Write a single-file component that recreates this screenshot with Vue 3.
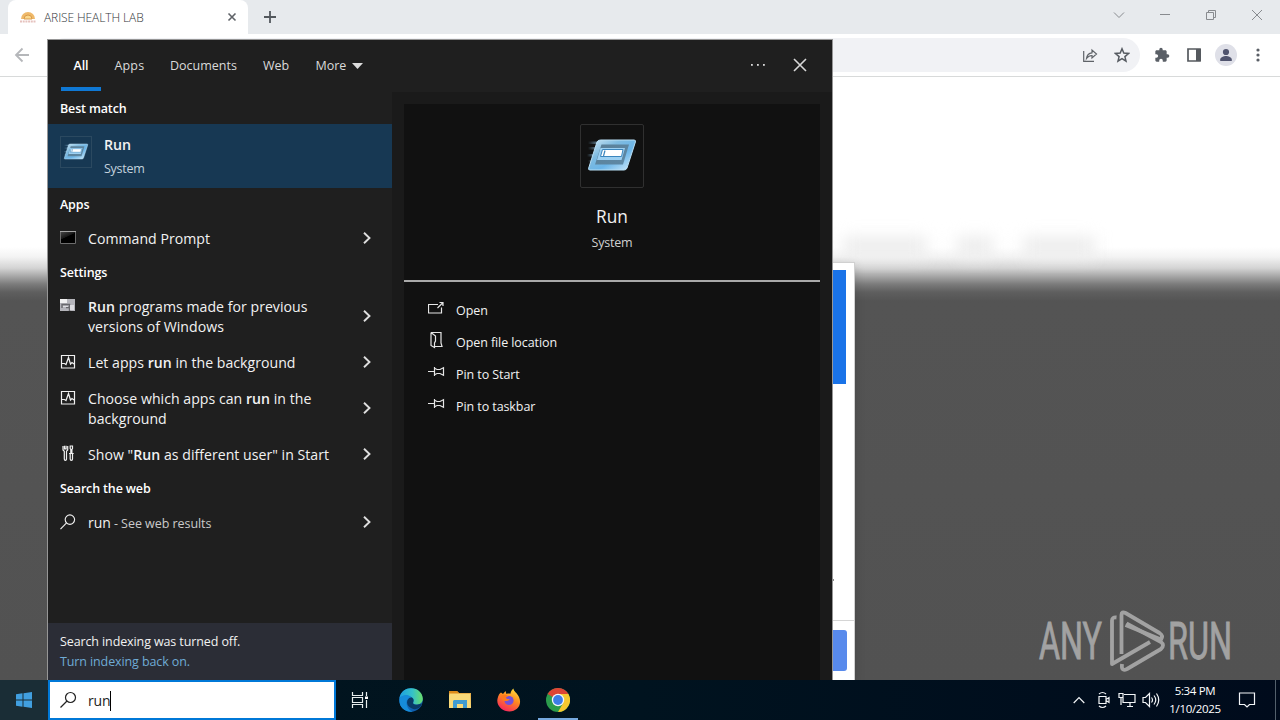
<script setup>
const tabs = ['All', 'Apps', 'Documents', 'Web', 'More']
const settings = [
  { icon: 'compat', parts: ['', 'Run', ' programs made for previous versions of Windows'], tall: true },
  { icon: 'activity', parts: ['Let apps ', 'run', ' in the background'] },
  { icon: 'activity', parts: ['Choose which apps can ', 'run', ' in the background'], tall: true },
  { icon: 'tools', parts: ['Show "', 'Run', ' as different user" in Start'] }
]
const actions = [
  { icon: 'open', label: 'Open' },
  { icon: 'location', label: 'Open file location' },
  { icon: 'pin', label: 'Pin to Start' },
  { icon: 'pin', label: 'Pin to taskbar' }
]
</script>

<template>
  <div class="screen">
    <svg class="defs" width="0" height="0">
      <defs>
        <linearGradient id="runFace" x1="0" y1="0" x2="1" y2="1">
          <stop offset="0" stop-color="#cfe8f6" /><stop offset=".35" stop-color="#7fbbe0" /><stop offset=".6" stop-color="#6bb5e8" /><stop offset="1" stop-color="#d8effb" />
        </linearGradient>
        <linearGradient id="runInner" x1="0" y1="0" x2="1" y2="1"><stop offset="0" stop-color="#5a7f98" /><stop offset="1" stop-color="#5f8aa6" /></linearGradient>
        <linearGradient id="runTail"><stop offset="0" stop-color="#7fb0d0" stop-opacity="0" /><stop offset="1" stop-color="#9cc8e4" /></linearGradient>
        <linearGradient id="edgeA" x1="0" y1="0" x2="1" y2="0"><stop offset="0" stop-color="#1c9fe0" /><stop offset=".55" stop-color="#35c1c9" /><stop offset="1" stop-color="#6adf6a" /></linearGradient>
        <linearGradient id="edgeB" x1="0" y1="0" x2="1" y2="1"><stop offset="0" stop-color="#1b8fe0" /><stop offset="1" stop-color="#0c4f9e" /></linearGradient>
        <linearGradient id="fox" x1=".8" y1="0" x2=".3" y2="1"><stop offset="0" stop-color="#ffe23f" /><stop offset=".45" stop-color="#ff8a1f" /><stop offset="1" stop-color="#f7235f" /></linearGradient>
        <symbol id="run" viewBox="0 0 64 64">
          <g fill="url(#runTail)"><rect x="8" y="17.500" width="16" height="2.500" /><rect x="8" y="23" width="14" height="2.500" /><rect x="7" y="30" width="12" height="2.500" /><rect x="8" y="36" width="10" height="2.500" /></g>
          <path d="M20.500 16H54q2 0 1.400 2L47 44q-.7 2-3 2H10q-2 0-1.300-2l8.300-26q.8-2 3.500-2z" fill="url(#runFace)" stroke="#b8dff5" stroke-width="1" />
          <path d="M21.500 20.500h27.500l-6 20H15z" fill="url(#runInner)" />
          <path d="M20.500 24h24.500l-3.500 12H17z" fill="#9cd0f2" />
          <path d="M22.500 25.500h20.500l-1.500 7H20.500z" fill="#fff" stroke="#3b86be" stroke-width="1" />
          <path d="M25 26.500l-1.500 5.500" stroke="#3b86be" stroke-width="1.200" />
        </symbol>
        <linearGradient id="cmd" x1="0" y1="0" x2=".6" y2="1"><stop offset="0" stop-color="#4a4a4a" /><stop offset=".5" stop-color="#161616" /><stop offset=".52" stop-color="#000" /></linearGradient>
      </defs>
    </svg>

    <main class="desktop">
      <section class="browser">
        <div class="tabstrip">
          <div class="tab">
            <svg class="favicon" width="16" height="14" viewBox="0 0 16 14">
              <path d="M1 9a7 7 0 0114 0z" fill="#efb96a" /><path d="M4 9a4 4 0 018 0z" fill="#fbd98e" stroke="#d99a4a" /><path d="M0 11.500h16" stroke="#e6c2be" stroke-width="2" stroke-dasharray="2 .7" />
            </svg>
            <span class="tab-title">ARISE HEALTH LAB</span>
            <svg width="10" height="10" viewBox="0 0 10 10"><path d="M1.500 1.500l7 7m0-7l-7 7" stroke="#5f6368" stroke-width="1.600" /></svg>
          </div>
          <svg class="plus" width="12" height="12" viewBox="0 0 12 12"><path d="M6 0v12M0 6h12" stroke="#53585d" stroke-width="1.800" /></svg>
          <div class="window-controls">
            <svg width="12" height="12" viewBox="0 0 12 12"><path d="M1 3.500l5 5 5-5" /></svg>
            <svg width="12" height="12" viewBox="0 0 12 12"><path d="M1 5.500h10" /></svg>
            <svg width="12" height="12" viewBox="0 0 12 12"><path d="M1.500 3.500h7v7h-7zM3.500 3.500v-2h7v7h-2" /></svg>
            <svg width="12" height="12" viewBox="0 0 12 12"><path d="M1 1l10 10M11 1L1 11" /></svg>
          </div>
        </div>
        <div class="toolbar">
          <svg class="back" width="16" height="16" viewBox="0 0 16 16"><path d="M15 8H2m6.500-6.500L2 8l6.500 6.500" fill="none" stroke="#b5b7ba" stroke-width="1.800" /></svg>
          <div class="address">
            <svg width="16" height="16" viewBox="0 0 16 16"><path d="M1.700 4v10.300H12M4.500 11.500C5 7.500 7.500 6 10 5.800V3l4.500 4-4.500 4V8.500c-2.500 0-4 1-5.500 3z" fill="none" stroke="#5f6368" stroke-width="1.200" /></svg>
            <svg width="16" height="16" viewBox="0 0 16 16"><path d="M8 1.800l1.800 4.300 4.700.4-3.600 3.100 1.100 4.600L8 11.700l-4 2.500 1.100-4.600-3.600-3.100 4.700-.4z" fill="none" stroke="#565b61" stroke-width="1.500" /></svg>
          </div>
          <div class="tools">
            <svg width="16" height="16" viewBox="0 0 24 24"><path fill="#5a5f66" d="M20.500 11H19V7c0-1.100-.9-2-2-2h-4V3.500a2.500 2.500 0 00-5 0V5H4c-1.100 0-2 .9-2 2v3.800h1.500a2.700 2.700 0 010 5.400H2V20c0 1.100.9 2 2 2h3.800v-1.500a2.700 2.700 0 015.400 0V22H17c1.100 0 2-.9 2-2v-4h1.500a2.500 2.500 0 000-5z" /></svg>
            <svg width="14" height="14" viewBox="0 0 14 14"><path d="M1 1h12v12H1z" fill="#fff" stroke="#55595e" stroke-width="1.700" /><path d="M9 1h5v12H9z" fill="#55595e" /></svg>
            <svg width="22" height="22" viewBox="0 0 22 22"><circle cx="11" cy="11" r="11" fill="#dfe0e8" /><circle cx="11" cy="8" r="3.100" fill="#50546e" /><path d="M5.200 17v-1.500c0-2.300 3.600-3.500 5.800-3.500s5.800 1.200 5.800 3.500V17z" fill="#50546e" /></svg>
            <svg width="4" height="14" viewBox="0 0 4 14"><g fill="#5a5f66"><circle cx="2" cy="2" r="1.600" /><circle cx="2" cy="7" r="1.600" /><circle cx="2" cy="12" r="1.600" /></g></svg>
          </div>
        </div>
        <div class="page">
          <div class="blurred-nav"><i class="n1"></i><i class="n2"></i><i class="n3"></i></div>
          <div class="dialog">
            <div class="dialog-banner"></div>
            <div class="dialog-body"><i></i></div>
            <div class="dialog-foot"><div class="dialog-button"></div></div>
          </div>
          <svg class="watermark" width="200" height="64" viewBox="0 0 200 64">
            <g font-family="Roboto, sans-serif" font-size="51" font-weight="400" fill="#a2a2a2" stroke="#a2a2a2" stroke-width=".9">
              <text x="1" y="50" textLength="63" lengthAdjust="spacingAndGlyphs">ANY</text>
              <text x="130" y="50" textLength="64" lengthAdjust="spacingAndGlyphs">RUN</text>
            </g>
            <g fill="none" stroke="#a2a2a2" stroke-width="3.800" stroke-linejoin="round">
              <path d="M78.500 8.500q-4.500-.5-4.500 3V55l38-22" />
              <path d="M83.500 45V6q0-4 4-2l34 20q4 2.500 1.500 6.500L87.500 16" />
              <path d="M84 55q-1 8 5 5l34-20q4-4 0-7L88.500 14.500" />
            </g>
          </svg>
        </div>
      </section>

      <section class="search-panel">
        <header class="filters">
          <div v-for="(tab, i) in tabs" :key="tab" :class="['filter', 'f' + i, { active: i === 0 }]">
            <span>{{ tab }}</span>
            <svg v-if="tab === 'More'" width="11" height="6" viewBox="0 0 11 6"><path d="M0 0h11L5.500 6z" fill="#dcdcdc" /></svg>
          </div>
          <svg class="dots" width="16" height="4" viewBox="0 0 16 4"><g fill="#d8d8d8"><rect x="1" y="1" width="1.800" height="1.800" /><rect x="7" y="1" width="1.800" height="1.800" /><rect x="13" y="1" width="1.800" height="1.800" /></g></svg>
          <svg class="close" width="14" height="14" viewBox="0 0 14 14"><path d="M1 1l12 12M13 1L1 13" stroke="#d8d8d8" stroke-width="1.600" /></svg>
        </header>
        <div class="columns">
          <div class="results">
            <h3>Best match</h3>
            <div class="best">
              <div class="best-icon"><svg width="32" height="32"><use href="#run" /></svg></div>
              <div><b>Run</b><span>System</span></div>
            </div>
            <h3>Apps</h3>
            <div class="row">
              <svg class="row-icon" width="16" height="16" viewBox="0 0 16 16"><path d="M.5 2.500h15v12H.5z" fill="url(#cmd)" stroke="#6c6c6c" stroke-width="1" /><path d="M0 2.500h16" stroke="#a5a5a5" stroke-width="1" /></svg>
              <span class="row-text">Command Prompt</span>
              <svg class="chevron" width="8" height="12" viewBox="0 0 8 12"><path d="M1 .8L6.500 6 1 11.200" /></svg>
            </div>
            <h3>Settings</h3>
            <div v-for="(item, i) in settings" :key="i" :class="['row', { tall: item.tall }]">
              <svg class="row-icon" width="16" height="16" viewBox="0 0 16 16">
                <template v-if="item.icon === 'compat'"><path d="M0 2h15v12H0z" fill="#b4b4ba" stroke="none" /><path d="M0 2h7v4H0z" fill="#f0f0f0" stroke="none" /><path d="M2 11V7.500h7.500V14M6 10.500h3" fill="none" stroke="#68686c" stroke-width="1.400" /><path d="M3 9h5v1H3zM10 8h4v5h-4z" fill="#dcdce0" stroke="none" /></template>
                <path v-else-if="item.icon === 'activity'" d="M1.500 2.500h13v12.500h-13zM2 10.500h2.500l1.500 1 2.500-7 2 6.500 1.500-1.500 2 1.500" />
                <path v-else d="M3 1v4l1.300 1.200V14q0 1.300 1.100 1.300T6.500 14V6.200L7.700 5V1M4.500.8v3h1.600v-3M10.200 1h2.300v2.500l-.6 1v4h-1.100v-4l-.6-1zM9 8.500h4.700M10.200 8.500V14q0 1.300 1.150 1.300T12.500 14V8.500" />
              </svg>
              <span class="row-text">{{ item.parts[0] }}<b>{{ item.parts[1] }}</b>{{ item.parts[2] }}</span>
              <svg class="chevron" width="8" height="12" viewBox="0 0 8 12"><path d="M1 .8L6.500 6 1 11.200" /></svg>
            </div>
            <h3>Search the web</h3>
            <div class="row">
              <svg class="row-icon" width="17" height="17" viewBox="0 0 17 17"><circle cx="10.500" cy="6.500" r="5" /><path d="M7 10L.5 16.500" /></svg>
              <span class="row-text web">run<small> - See web results</small></span>
              <svg class="chevron" width="8" height="12" viewBox="0 0 8 12"><path d="M1 .8L6.500 6 1 11.200" /></svg>
            </div>
            <footer class="index-note"><span>Search indexing was turned off.</span><a>Turn indexing back on.</a></footer>
          </div>
          <div class="preview">
            <div class="card">
              <div class="hero">
                <div class="hero-icon"><svg width="64" height="64" viewBox="0 0 64 64"><use href="#run" /></svg></div>
                <strong>Run</strong>
                <span>System</span>
              </div>
              <ul class="actions">
                <li v-for="(a, i) in actions" :key="i">
                  <svg width="17" height="17" viewBox="0 0 17 17">
                    <path v-if="a.icon === 'open'" d="M10 4.500H.5v8.500h13V7.500M9.500 8l5-5M11.500 2.500h3.500v3.500" />
                    <path v-else-if="a.icon === 'location'" d="M3 .5h10V11l1 3.500H7M3 .5V13.500l3.500 2v-4.500l1-2V4L3 .5" />
                    <path v-else d="M0 7.500h6.500M6.500 3v9M6.500 4.300l2.500 1.200h3l3.500-1.700v7.400l-3.500-1.700h-3l-2.500 1.200" />
                  </svg>
                  <span>{{ a.label }}</span>
                </li>
              </ul>
            </div>
          </div>
        </div>
      </section>
    </main>

    <footer class="taskbar">
      <div class="start"><svg width="16" height="16" viewBox="0 0 16 16"><path d="M0 2.300L6.500 1.300v6.200H0zM7.500 1.200L16 0v7.500H7.500zM0 8.500h6.500v6.200L0 13.800zM7.500 8.500H16V16l-8.500-1.200z" fill="#419fe0" /></svg></div>
      <div class="search-box">
        <svg width="17" height="17" viewBox="0 0 17 17"><circle cx="10.500" cy="6.500" r="5" fill="none" stroke="#222" stroke-width="1.200" /><path d="M7 10L.5 16.500" stroke="#222" stroke-width="1.200" /></svg>
        <span>run</span>
      </div>
      <div class="apps">
        <div><svg width="18" height="18" viewBox="0 0 18 18"><path d="M1.500 1v3.500h10V1M1.500 17v-3.500h10V17M1.500 6.500h10v5h-10zM15.500 1v4M15.500 9v8" fill="none" stroke="#e8eeee" stroke-width="1.200" /><path d="M14 5.500h3V8h-3z" fill="#fff" /></svg></div>
        <div><svg width="24" height="24" viewBox="0 0 24 24"><circle cx="12" cy="12" r="11.800" fill="url(#edgeB)" /><path d="M.5 10C2 3 7 .2 12 .2c7 0 11.800 5 11.800 10.500 0 4-3 5.800-6 5.800-3 0-4.500-1-3.500-2.300C15.500 12.500 14 9 10 8 6 7 2 8 .5 10z" fill="url(#edgeA)" /><path d="M8 14.500c0-3 2-5 4-5 2.500 0 3 2.500 2.300 4.300-1 2 1 3.500 4.700 2.700 2-.4 3.500-1 4-.5-2 5-7 6-10 4.500-2.500-1-5-3-5-6z" fill="#093b67" /><path d="M1 10c4-5 10-3 11-.8-3 .3-5 3-4.500 6.300C8 20 11 23 14 23.500 5 25-1 18 1 10z" fill="#168cda" /></svg></div>
        <div><svg width="22" height="20" viewBox="0 0 22 20"><path d="M0 1h8l2 2h12v15H0z" fill="#e9b04a" /><path d="M1 4h20l1 14H0V5z" fill="#f9d978" /><path d="M0 1h8l2 2H0z" fill="#dd8b19" /><path d="M4 18v-7l1-1h13v8h-4v-4H8v4z" fill="#409bd0" /></svg></div>
        <div><svg width="24" height="24" viewBox="0 0 24 24"><path d="M4 4.500l2 1.500L8.500 3l1 3c2-1 4 0 4-.5 0-2 2-4.500 3-5 0 3 3.500 4 5.500 8.500 3.500 8-2 14.500-9.500 14.500C5 23.500-2 17 1 9c.7-2 1-3 3-4.500z" fill="url(#fox)" /><circle cx="12" cy="12.500" r="4.600" fill="#7650d8" /><path d="M4 8c3-2 6-1.500 7 .5-2 .3-2.500 1-1.500 2 1 .8 2.500.5 3.500.2-1 2.500-6 3.500-8 .5z" fill="#ff791f" /></svg></div>
        <div class="current"><svg width="24" height="24" viewBox="0 0 24 24"><circle cx="12" cy="12" r="12" fill="#2b9c4c" /><path d="M12 12L1.600 6A12 12 0 0122.400 6z" fill="#dd4435" /><path d="M12 6h10.400A12 12 0 0112 24l5.200-9z" fill="#f6c82f" /><circle cx="12" cy="12" r="6.200" fill="#f3f6fa" /><circle cx="12" cy="12" r="4.900" fill="#3c7de7" /></svg></div>
      </div>
      <div class="tray">
        <svg width="12" height="12" viewBox="0 0 12 12"><path d="M.7 9L6 3.500 11.300 9" /></svg>
        <svg width="14" height="18" viewBox="0 0 14 18"><path d="M2 5.500h7v7H2zM9 8.500l3-2v5l-3-2M2 3q3.500-3 7 0M2 15q3.500 3 7 0" /></svg>
        <svg width="18" height="16" viewBox="0 0 18 16"><path d="M6 2.500h11v8H5V6M9 14.500h6M12 11v3.500M1 1.500h4v4H1zM3 5.500V13" /></svg>
        <svg width="18" height="16" viewBox="0 0 18 16"><path d="M1 5.500h2.500l4-4v13l-4-4H1zM9.500 5.500q2 2.500 0 5M12 3.500q3.500 4.500 0 9M14.500 1.500q4.500 6.500 0 13" /></svg>
        <div class="clock"><span>5:34 PM</span><span>1/10/2025</span></div>
        <svg class="notice" width="18" height="18" viewBox="0 0 18 18"><path d="M1.500 2h15v11.500h-5L9 16l-2.500-2.500h-5z" /></svg>
      </div>
    </footer>
  </div>
</template>

<style>
body { margin: 0; overflow: hidden; }
</style>

<style scoped>
* { box-sizing: border-box; }
.screen { width: 1280px; height: 720px; display: grid; grid-template-rows: 680px 40px; overflow: hidden; font-family: "Open Sans", "Noto Sans", sans-serif; color: #f2f2f2; }
.defs { position: absolute; }
svg { display: block; flex: none; }
.desktop { position: relative; overflow: hidden; }
.browser { height: 680px; display: flex; flex-direction: column; background: #fff; }
.tabstrip { height: 34px; display: flex; align-items: center; background: #e7eaed; padding-left: 8px; flex: none; }
.tab { width: 240px; height: 34px; background: #fff; border-radius: 8px 8px 0 0; display: flex; align-items: center; padding: 0 11px 0 12px; }
.tab-title { flex: 1; margin-left: 8px; font-size: 12px; letter-spacing: -.1px; font-weight: 300; color: #33373b; white-space: nowrap; }
.plus { margin-left: 16px; }
.window-controls { margin: -5px 17px 0 auto; display: flex; gap: 34px; }
.window-controls path { fill: none; stroke: #888b8f; stroke-width: 1; }
.toolbar { height: 43px; flex: none; display: flex; align-items: center; border-bottom: 1px solid #d8dada; padding: 0 20px 0 14px; }
.address { margin-left: 18px; width: 1092px; height: 34px; border-radius: 17px; background: #f1f2f5; display: flex; align-items: center; justify-content: flex-end; gap: 16px; padding-right: 10px; }
.tools { margin-left: auto; display: flex; align-items: center; }
.tools svg:nth-child(2) { margin-left: 17px; }
.tools svg:nth-child(3) { margin-left: 14px; }
.tools svg:nth-child(4) { margin-left: 19px; }
.page { position: relative; flex: 1; background: linear-gradient(#fff 0, #fff 170px, #f3f3f3 180px, #d4d4d4 191px, #a8a8a8 199px, #7c7c7c 207px, #5f5f5f 215px, #545454 224px, #525252 100%); }
.blurred-nav { position: absolute; left: 843px; top: 160px; display: flex; gap: 30px; filter: blur(8px); }
.blurred-nav i { height: 20px; background: #ececec; }
.n1 { width: 84px; } .n2 { width: 36px; } .n3 { width: 72px; }
.dialog { position: absolute; left: 425px; top: 185px; width: 430px; height: 418px; background: #fff; border: 1px solid #d0d0d0; border-bottom: 0; display: flex; flex-direction: column; box-shadow: 0 3px 10px rgba(0, 0, 0, .15); }
.dialog-banner { height: 114px; margin: 7px 8px 0; background: #1a73e8; flex: none; }
.dialog-body { flex: 1; display: flex; justify-content: flex-end; align-items: flex-end; padding: 0 20px 39px; }
.dialog-body i { width: 2px; height: 2px; background: #888; }
.dialog-foot { height: 60px; border-top: 1px solid #d5d5d5; padding: 9px 7px; display: flex; justify-content: flex-end; }
.dialog-button { width: 90px; height: 41px; background: #588aec; border-radius: 3px; }
.watermark { position: absolute; left: 1038px; top: 532px; }

.search-panel { position: absolute; left: 47px; top: 39px; width: 786px; height: 641px; border: 1px solid #969696; border-bottom: 0; background: #1f1f1f; display: flex; flex-direction: column; }
.filters { height: 52px; flex: none; display: flex; align-items: center; padding: 0 25px 0 13px; }
.filter { height: 52px; display: flex; align-items: center; padding-bottom: 1px; font-size: 12.500px; color: #dadada; }
.filter.active { width: 40px; justify-content: center; font-weight: 600; color: #fff; border-bottom: 4px solid #0f78d4; padding: 4px 0 1px; }
.f0 { height: 51px; margin-top: -1px; }
.f1 { margin-left: 13.500px; width: 55.500px; letter-spacing: .15px; }
.f2 { width: 93px; }
.f3 { width: 52.500px; }
.f4 svg { margin-left: 6px; }
.dots { margin: -2px 0 0 auto; }
.close { margin: -2px 0 0 27px; }
.columns { flex: 1; display: flex; }
.results { width: 344px; display: flex; flex-direction: column; }
h3 { margin: 0; height: 32px; line-height: 33px; padding-left: 12px; font-size: 12.500px; font-weight: 600; letter-spacing: -.15px; color: #fff; }
.best { height: 64px; background: #173853; display: flex; padding: 12px; gap: 12px; }
.best-icon { width: 32px; height: 32px; border: 1px solid #2b4960; display: flex; align-items: center; justify-content: center; }
.best b, .best span { display: block; line-height: 20px; }
.best b { font-size: 14.200px; font-weight: 600; margin-top: -1px; }
.best span { font-size: 12.500px; margin-top: 4px; color: #c3d2dd; letter-spacing: -.25px; }
.row { height: 36px; display: flex; align-items: center; padding: 0 21px 0 12px; }
.row.tall { height: 56px; }
.row-icon { align-self: flex-start; margin-top: 9px; width: 16px; fill: none; stroke: #f0f0f0; stroke-width: 1.200; }
.row-text { width: 250px; margin: 2px 0 0 12px; font-size: 14.100px; line-height: 20px; letter-spacing: .03px; }
.row-text.web { font-size: 14px; letter-spacing: -.05px; }
.row-text b { font-weight: 600; }
.row-text small { font-size: 12.500px; color: #cacaca; }
.chevron { margin-left: auto; }
.chevron path { fill: none; stroke: #dedede; stroke-width: 1.900; }
.index-note { margin-top: auto; height: 57px; background: #2b2d36; padding: 9px 12px; font-size: 12.500px; line-height: 20px; letter-spacing: -.11px; display: flex; flex-direction: column; }
.index-note a { color: #6fabd5; }
.preview { width: 440px; background: #1a1a1a; padding: 12px 12px 0; display: flex; }
.card { flex: 1; background: #111; }
.hero { height: 178px; border-bottom: 2px solid #a9a9a9; display: flex; flex-direction: column; align-items: center; padding-top: 20px; }
.hero-icon { width: 64px; height: 64px; border: 1px solid #303030; border-radius: 2px; display: flex; align-items: center; justify-content: center; }
.hero strong { font-size: 17.300px; font-weight: 400; line-height: 26px; margin-top: 16px; }
.hero span { font-size: 12.500px; line-height: 20px; color: #d0d0d0; margin-top: 3px; letter-spacing: -.2px; }
.actions { list-style: none; margin: 12px 0 0; padding: 0 0 0 24px; }
.actions li { height: 32px; display: flex; align-items: center; font-size: 12.500px; }
.actions svg { margin-top: -4px; fill: none; stroke: #e6e6e6; stroke-width: 1.200; }
.actions span { margin-left: 11px; margin-top: 1px; letter-spacing: -.08px; }

.taskbar { display: flex; background: linear-gradient(90deg, #02151e, #00131f 50%, #000b1c); }
.start { width: 48px; background: #1a2d36; display: flex; align-items: center; justify-content: center; }
.search-box { width: 288px; background: #fff; border: 2px solid #0078d7; display: flex; align-items: center; padding-left: 10px; color: #222; }
.search-box svg { margin-top: -1px; }
.search-box span { margin: 1px 0 0 11px; font-size: 14px; line-height: 20px; letter-spacing: -.2px; border-right: 1px solid #000; }
.apps { display: flex; }
.apps > div { width: 49px; height: 40px; display: flex; align-items: center; justify-content: center; }
.apps > div:first-child { width: 50px; padding-right: 2px; }
.apps .current { width: 40px; margin-left: 5px; border-bottom: 2px solid #76a9df; padding-top: 2px; }
.tray { margin-left: auto; width: 203px; display: flex; align-items: center; border-right: 1px solid #53606c; margin-right: 4px; }
.tray svg { fill: none; stroke: #f2f5f7; stroke-width: 1.200; }
.tray svg:nth-child(2) { margin-left: 12px; }
.tray svg:nth-child(3) { margin-left: 7px; }
.tray svg:nth-child(4) { margin-left: 6px; }
.clock { margin-left: 7px; width: 56px; display: flex; flex-direction: column; align-items: center; font-size: 11.500px; line-height: 18px; letter-spacing: -.35px; color: #fff; white-space: nowrap; }
.notice { margin-left: 15px; }
</style>
